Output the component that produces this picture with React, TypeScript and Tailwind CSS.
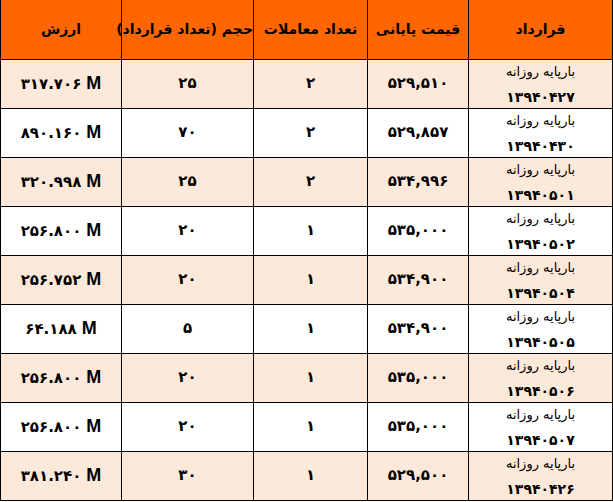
import React from "react";

const rows = [
  ["۱۳۹۴۰۴۲۷", "۵۲۹,۵۱۰", "۲", "۲۵", "۳۱۷.۷۰۶"],
  ["۱۳۹۴۰۴۳۰", "۵۲۹,۸۵۷", "۲", "۷۰", "۸۹۰.۱۶۰"],
  ["۱۳۹۴۰۵۰۱", "۵۳۴,۹۹۶", "۲", "۲۵", "۳۲۰.۹۹۸"],
  ["۱۳۹۴۰۵۰۲", "۵۳۵,۰۰۰", "۱", "۲۰", "۲۵۶.۸۰۰"],
  ["۱۳۹۴۰۵۰۴", "۵۳۴,۹۰۰", "۱", "۲۰", "۲۵۶.۷۵۲"],
  ["۱۳۹۴۰۵۰۵", "۵۳۴,۹۰۰", "۱", "۵", "۶۴.۱۸۸"],
  ["۱۳۹۴۰۵۰۶", "۵۳۵,۰۰۰", "۱", "۲۰", "۲۵۶.۸۰۰"],
  ["۱۳۹۴۰۵۰۷", "۵۳۵,۰۰۰", "۱", "۲۰", "۲۵۶.۸۰۰"],
  ["۱۳۹۴۰۴۲۶", "۵۲۹,۵۰۰", "۱", "۳۰", "۳۸۱.۲۴۰"],
];

const fa = { fontFamily: '"DejaVu Sans", "Noto Sans", sans-serif' };

export default function App() {
  return (
    <div className="w-[613px] h-[502px] bg-white overflow-hidden" style={fa}>
      <table dir="rtl" className="w-[612px] border-collapse table-fixed text-black">
        <colgroup>
          <col className="w-[144px]" />
          <col className="w-[101px]" />
          <col className="w-[114px]" />
          <col className="w-[132px]" />
          <col className="w-[121px]" />
        </colgroup>
        <thead>
          <tr className="h-[59px] bg-[#ff6600]">
            {["قرارداد", "قیمت پایانی", "تعداد معاملات", "حجم (تعداد قرارداد)", "ارزش"].map((h, i) => (
              <th
                key={i}
                className="border-x border-b border-black text-[14px] font-bold text-center align-middle p-0 whitespace-nowrap"
              >
                {h}
              </th>
            ))}
          </tr>
        </thead>
        <tbody>
          {rows.map((r, i) => (
            <tr key={i} className={`h-[49px] ${i % 2 === 0 ? "bg-[#fde9d9]" : "bg-white"}`}>
              <td className="border border-black p-0 align-top">
                <div className="h-[48px] flex flex-col items-center justify-between pt-[2px] pb-[1px] text-[13px] leading-[20px]">
                  <span>بارپایه روزانه</span>
                  <span className="font-bold text-[14px]">{r[0]}</span>
                </div>
              </td>
              <td className="border border-black p-0 text-center text-[15px] font-bold">{r[1]}</td>
              <td className="border border-black p-0 text-center text-[15px] font-bold">{r[2]}</td>
              <td className="border border-black p-0 text-center text-[15px] font-bold">{r[3]}</td>
              <td className="border border-black p-0 text-center">
                <span dir="ltr" className="inline-flex items-baseline gap-[5px]">
                  <span className="text-[15px] font-bold">{r[4]}</span>
                  <span className="text-[18px] font-bold" style={{ fontFamily: '"Liberation Sans", Arial, sans-serif' }}>M</span>
                </span>
              </td>
            </tr>
          ))}
        </tbody>
      </table>
    </div>
  );
}
